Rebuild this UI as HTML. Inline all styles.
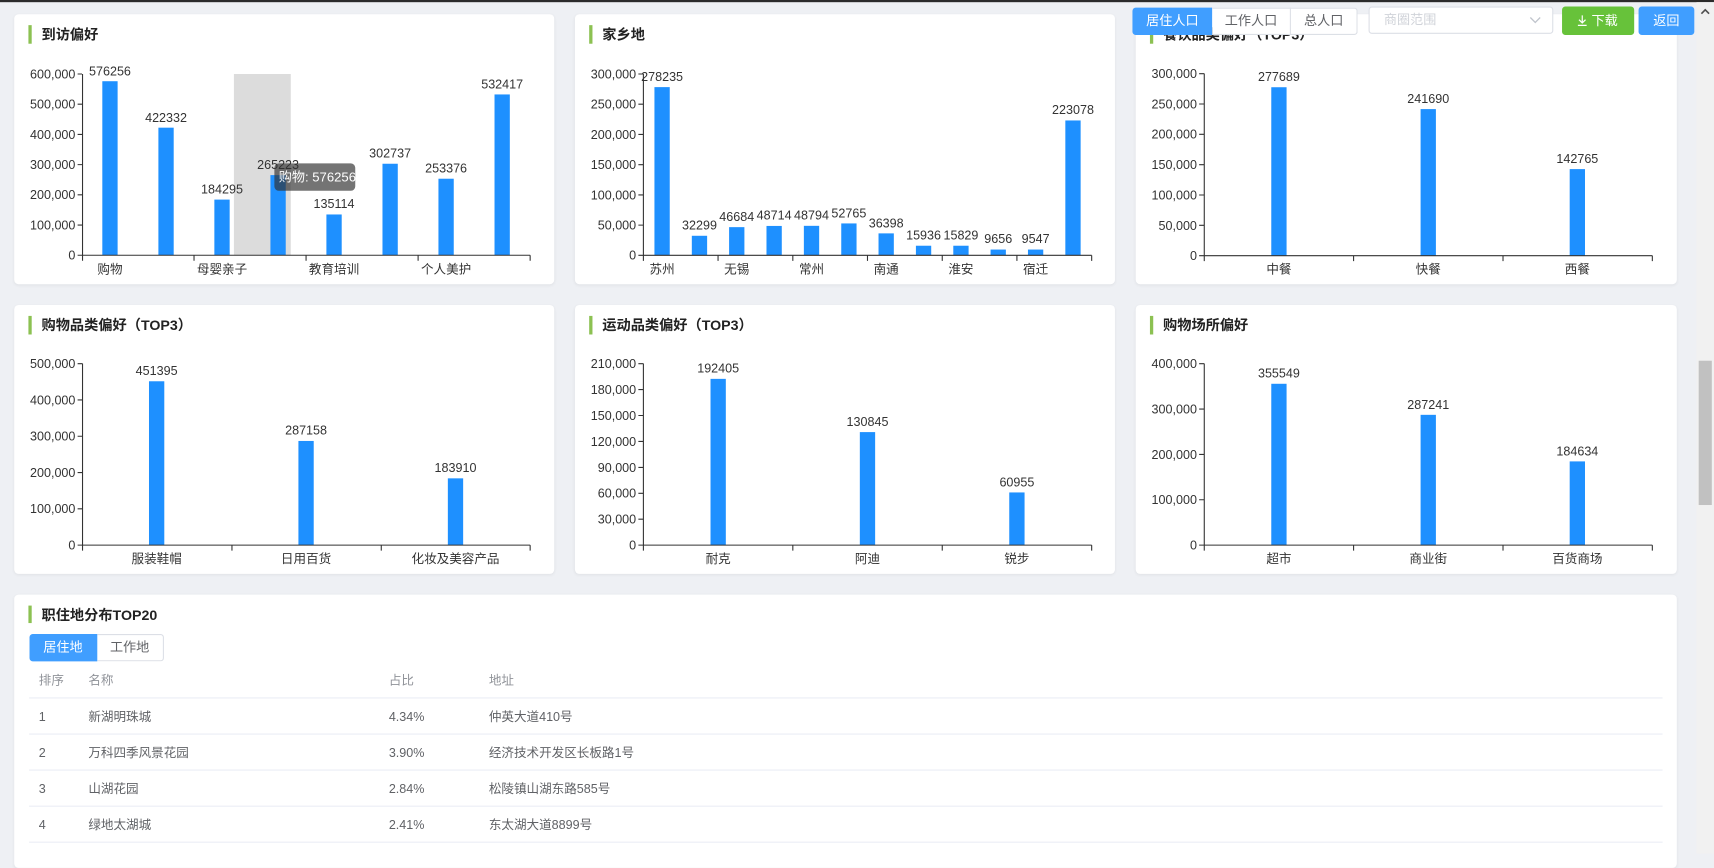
<!DOCTYPE html>
<html><head><meta charset="utf-8">
<style>
*{margin:0;padding:0;box-sizing:border-box}
html,body{width:1714px;height:854px;overflow:hidden;background:#eef0f4}
#w{position:absolute;left:0;top:0;width:1568px;height:781px;transform:scale(1.0931);transform-origin:0 0;font-family:"Liberation Sans","Noto Sans CJK SC",sans-serif;background:#eef0f4}
.card{position:absolute;background:#fff;border-radius:4px;box-shadow:0 1px 3px rgba(0,0,0,.06)}
.abs{position:absolute}
.btn{position:absolute;font-size:12px;text-align:center;line-height:25px;height:25px}
svg text{font-family:"Liberation Sans","Noto Sans CJK SC",sans-serif}
.tr td{height:33px}
</style></head><body>
<div id="w">
<div class="abs" style="left:0;top:0;width:1568px;height:2px;background:#2b2b2b"></div>
<div class="card" style="left:13px;top:13px;width:494px;height:247px"></div>
<div class="card" style="left:526px;top:13px;width:494px;height:247px"></div>
<div class="card" style="left:1039px;top:13px;width:495px;height:247px"></div>
<div class="card" style="left:13px;top:279px;width:494px;height:246px"></div>
<div class="card" style="left:526px;top:279px;width:494px;height:246px"></div>
<div class="card" style="left:1039px;top:279px;width:495px;height:246px"></div>
<div class="card" style="left:13px;top:544px;width:1521px;height:250px"></div>

<svg class="abs" style="left:0;top:0" width="1568" height="781" viewBox="0 0 1568 781">
<g fill="#8cc152">
<rect x="26" y="23" width="3" height="17"/><rect x="539" y="23" width="3" height="17"/><rect x="1052" y="23" width="3" height="17"/>
<rect x="26" y="289" width="3" height="17"/><rect x="539" y="289" width="3" height="17"/><rect x="1052" y="289" width="3" height="17"/>
<rect x="26" y="554" width="3" height="16"/>
</g>
<g font-size="13" font-weight="bold" fill="#222">
<text x="38" y="36">到访偏好</text><text x="551" y="36">家乡地</text><text x="1064" y="36">餐饮品类偏好（TOP3）</text>
<text x="38" y="302">购物品类偏好（TOP3）</text><text x="551" y="302">运动品类偏好（TOP3）</text><text x="1064" y="302">购物场所偏好</text>
<text x="38" y="567">职住地分布TOP20</text>
</g>

<!-- chart1 -->
<rect x="214" y="67.7" width="52" height="165.8" fill="#dcdcdc"/>
<g fill="#1e90ff">
<rect x="93.6" y="74.3" width="14" height="159.2"/><rect x="144.9" y="116.8" width="14" height="116.7"/><rect x="196.1" y="182.6" width="14" height="50.9"/><rect x="247.4" y="160.2" width="14" height="73.3"/><rect x="298.6" y="196.2" width="14" height="37.3"/><rect x="349.9" y="149.8" width="14" height="83.7"/><rect x="401.1" y="163.5" width="14" height="70"/><rect x="452.4" y="86.4" width="14" height="147.1"/>
</g>
<g stroke="#333" stroke-width="1" fill="none">
<path d="M75.5 67.7V233.5H485M71 233.5h4M71 205.9h4M71 178.2h4M71 150.6h4M71 123h4M71 95.3h4M71 67.7h4M75.5 233.5v5M177.5 233.5v5M280 233.5v5M382.5 233.5v5M485 233.5v5"/>
</g>
<g font-size="11.5" fill="#333" text-anchor="end">
<text x="69" y="237.5">0</text><text x="69" y="209.9">100,000</text><text x="69" y="182.2">200,000</text><text x="69" y="154.6">300,000</text><text x="69" y="127">400,000</text><text x="69" y="99.3">500,000</text><text x="69" y="71.7">600,000</text>
</g>
<g font-size="11.5" fill="#333" text-anchor="middle">
<text x="100.6" y="69">576256</text><text x="151.9" y="111.5">422332</text><text x="203.1" y="177">184295</text><text x="254.4" y="154.5">265223</text><text x="305.6" y="190.5">135114</text><text x="356.9" y="144">302737</text><text x="408.1" y="158">253376</text><text x="459.4" y="81">532417</text>
<text x="100.6" y="250">购物</text><text x="203.1" y="250">母婴亲子</text><text x="305.6" y="250">教育培训</text><text x="408.1" y="250">个人美护</text>
</g>
<rect x="251" y="149.5" width="74" height="25" rx="4" fill="rgba(50,50,50,0.68)"/>
<text x="255" y="166" font-size="12" fill="#fff">购物: 576256</text>

<!-- chart2 -->
<g fill="#1e90ff">
<rect x="598.7" y="79.7" width="14" height="153.9"/><rect x="632.9" y="215.7" width="14" height="17.9"/><rect x="667" y="207.8" width="14" height="25.8"/><rect x="701.2" y="206.7" width="14" height="26.9"/><rect x="735.4" y="206.6" width="14" height="27"/><rect x="769.6" y="204.4" width="14" height="29.2"/><rect x="803.7" y="213.5" width="14" height="20.1"/><rect x="837.9" y="224.8" width="14" height="8.8"/><rect x="872.1" y="224.8" width="14" height="8.8"/><rect x="906.2" y="228.3" width="14" height="5.3"/><rect x="940.4" y="228.3" width="14" height="5.3"/><rect x="974.6" y="110.2" width="14" height="123.4"/>
</g>
<g stroke="#333" fill="none">
<path d="M588.6 67.7V233.6H998.7M584 233.6h4.6M584 205.95h4.6M584 178.3h4.6M584 150.65h4.6M584 123h4.6M584 95.35h4.6M584 67.7h4.6M588.6 233.6v5M656.9 233.6v5M725.3 233.6v5M793.6 233.6v5M862 233.6v5M930.3 233.6v5M998.7 233.6v5"/>
</g>
<g font-size="11.5" fill="#333" text-anchor="end">
<text x="582" y="237.6">0</text><text x="582" y="210">50,000</text><text x="582" y="182.3">100,000</text><text x="582" y="154.7">150,000</text><text x="582" y="127">200,000</text><text x="582" y="99.4">250,000</text><text x="582" y="71.7">300,000</text>
</g>
<g font-size="11.5" fill="#333" text-anchor="middle">
<text x="605.7" y="74">278235</text><text x="639.9" y="210">32299</text><text x="674" y="202">46684</text><text x="708.2" y="201">48714</text><text x="742.4" y="201">48794</text><text x="776.6" y="199">52765</text><text x="810.7" y="208">36398</text><text x="844.9" y="219">15936</text><text x="879.1" y="219">15829</text><text x="913.2" y="222.5">9656</text><text x="947.4" y="222.5">9547</text><text x="981.6" y="104.5">223078</text>
<text x="605.7" y="250">苏州</text><text x="674" y="250">无锡</text><text x="742.4" y="250">常州</text><text x="810.7" y="250">南通</text><text x="879.1" y="250">淮安</text><text x="947.4" y="250">宿迁</text>
</g>

<!-- chart3 -->
<g fill="#1e90ff"><rect x="1163" y="79.8" width="14" height="154.1"/><rect x="1299.6" y="99.8" width="14" height="134.1"/><rect x="1436" y="154.7" width="14" height="79.2"/></g>
<g stroke="#333" fill="none"><path d="M1101.7 67.4V233.9H1511.6M1097 233.9h4.7M1097 206.15h4.7M1097 178.4h4.7M1097 150.65h4.7M1097 122.9h4.7M1097 95.15h4.7M1097 67.4h4.7M1101.7 233.9v5M1238.3 233.9v5M1375 233.9v5M1511.6 233.9v5"/></g>
<g font-size="11.5" fill="#333" text-anchor="end">
<text x="1095" y="237.9">0</text><text x="1095" y="210.2">50,000</text><text x="1095" y="182.4">100,000</text><text x="1095" y="154.7">150,000</text><text x="1095" y="126.9">200,000</text><text x="1095" y="99.2">250,000</text><text x="1095" y="71.4">300,000</text>
</g>
<g font-size="11.5" fill="#333" text-anchor="middle">
<text x="1170" y="74">277689</text><text x="1306.6" y="94">241690</text><text x="1443" y="149">142765</text>
<text x="1170" y="250">中餐</text><text x="1306.6" y="250">快餐</text><text x="1443" y="250">西餐</text>
</g>

<!-- chart4 -->
<g fill="#1e90ff"><rect x="136.3" y="348.8" width="14" height="149.9"/><rect x="273" y="403.4" width="14" height="95.3"/><rect x="409.7" y="437.6" width="14" height="61.1"/></g>
<g stroke="#333" fill="none"><path d="M75.5 332.7V498.7H485M71 498.7h4.5M71 465.5h4.5M71 432.3h4.5M71 399.1h4.5M71 365.9h4.5M71 332.7h4.5M75.5 498.7v5M212.2 498.7v5M348.8 498.7v5M485 498.7v5"/></g>
<g font-size="11.5" fill="#333" text-anchor="end">
<text x="69" y="502.7">0</text><text x="69" y="469.5">100,000</text><text x="69" y="436.3">200,000</text><text x="69" y="403.1">300,000</text><text x="69" y="369.9">400,000</text><text x="69" y="336.7">500,000</text>
</g>
<g font-size="11.5" fill="#333" text-anchor="middle">
<text x="143.3" y="343">451395</text><text x="280" y="397.5">287158</text><text x="416.7" y="432">183910</text>
<text x="143.3" y="515">服装鞋帽</text><text x="280" y="515">日用百货</text><text x="416.7" y="515">化妆及美容产品</text>
</g>

<!-- chart5 -->
<g fill="#1e90ff"><rect x="650" y="346.6" width="14" height="152.1"/><rect x="786.6" y="395.3" width="14" height="103.4"/><rect x="923.3" y="450.5" width="14" height="48.2"/></g>
<g stroke="#333" fill="none"><path d="M588.6 332.7V498.7H998.7M584 498.7h4.6M584 475h4.6M584 451.3h4.6M584 427.6h4.6M584 403.8h4.6M584 380.1h4.6M584 356.4h4.6M584 332.7h4.6M588.6 498.7v5M725.3 498.7v5M862 498.7v5M998.7 498.7v5"/></g>
<g font-size="11.5" fill="#333" text-anchor="end">
<text x="582" y="502.7">0</text><text x="582" y="479">30,000</text><text x="582" y="455.3">60,000</text><text x="582" y="431.6">90,000</text><text x="582" y="407.8">120,000</text><text x="582" y="384.1">150,000</text><text x="582" y="360.4">180,000</text><text x="582" y="336.7">210,000</text>
</g>
<g font-size="11.5" fill="#333" text-anchor="middle">
<text x="657" y="341">192405</text><text x="793.6" y="389.5">130845</text><text x="930.3" y="445">60955</text>
<text x="657" y="515">耐克</text><text x="793.6" y="515">阿迪</text><text x="930.3" y="515">锐步</text>
</g>

<!-- chart6 -->
<g fill="#1e90ff"><rect x="1163" y="351.1" width="14" height="147.6"/><rect x="1299.6" y="379.5" width="14" height="119.2"/><rect x="1436" y="422.1" width="14" height="76.6"/></g>
<g stroke="#333" fill="none"><path d="M1101.7 332.7V498.7H1511.6M1097 498.7h4.7M1097 457.2h4.7M1097 415.7h4.7M1097 374.2h4.7M1097 332.7h4.7M1101.7 498.7v5M1238.3 498.7v5M1375 498.7v5M1511.6 498.7v5"/></g>
<g font-size="11.5" fill="#333" text-anchor="end">
<text x="1095" y="502.7">0</text><text x="1095" y="461.2">100,000</text><text x="1095" y="419.7">200,000</text><text x="1095" y="378.2">300,000</text><text x="1095" y="336.7">400,000</text>
</g>
<g font-size="11.5" fill="#333" text-anchor="middle">
<text x="1170" y="345.5">355549</text><text x="1306.6" y="374">287241</text><text x="1443" y="416.5">184634</text>
<text x="1170" y="515">超市</text><text x="1306.6" y="515">商业街</text><text x="1443" y="515">百货商场</text>
</g>

<!-- table -->
<g stroke="#ebeef5"><path d="M26.6 638.5H1521M26.6 671.5H1521M26.6 704.5H1521M26.6 737.5H1521M26.6 770.5H1521"/></g>
<g font-size="11.5" fill="#909399"><text x="35.5" y="626">排序</text><text x="80.8" y="626">名称</text><text x="355.7" y="626">占比</text><text x="447.2" y="626">地址</text></g>
<g font-size="11.5" fill="#606266">
<text x="35.5" y="659.5">1</text><text x="80.8" y="659.5">新湖明珠城</text><text x="355.7" y="659.5">4.34%</text><text x="447.2" y="659.5">仲英大道410号</text>
<text x="35.5" y="692.5">2</text><text x="80.8" y="692.5">万科四季风景花园</text><text x="355.7" y="692.5">3.90%</text><text x="447.2" y="692.5">经济技术开发区长板路1号</text>
<text x="35.5" y="725.5">3</text><text x="80.8" y="725.5">山湖花园</text><text x="355.7" y="725.5">2.84%</text><text x="447.2" y="725.5">松陵镇山湖东路585号</text>
<text x="35.5" y="758.5">4</text><text x="80.8" y="758.5">绿地太湖城</text><text x="355.7" y="758.5">2.41%</text><text x="447.2" y="758.5">东太湖大道8899号</text>
</g>
</svg>

<!-- table tabs -->
<div class="btn" style="left:26.6px;top:580px;width:62px;background:#409eff;color:#fff;border-radius:3px 0 0 3px">居住地</div>
<div class="btn" style="left:88.6px;top:580px;width:61px;border:1px solid #dcdfe6;border-left:none;color:#606266;border-radius:0 3px 3px 0;line-height:23px">工作地</div>

<!-- top controls -->
<div class="btn" style="left:1036px;top:7px;width:73px;background:#409eff;color:#fff;border-radius:3px 0 0 3px">居住人口</div>
<div class="btn" style="left:1109px;top:7px;width:72px;background:#fff;border:1px solid #dcdfe6;border-left:none;color:#606266;line-height:23px">工作人口</div>
<div class="btn" style="left:1181px;top:7px;width:61px;background:#fff;border:1px solid #dcdfe6;border-left:none;color:#606266;border-radius:0 3px 3px 0;line-height:23px">总人口</div>
<div class="btn" style="left:1252px;top:6px;width:169px;background:#fff;border:1px solid #dcdfe6;border-radius:3px;color:#d0d3d9;text-align:left;padding-left:13px;line-height:23px">商圈范围
<svg class="abs" style="right:10px;top:8px" width="11" height="7" viewBox="0 0 11 7"><path d="M1 1l4.5 4.5L10 1" stroke="#c0c4cc" fill="none" stroke-width="1.2"/></svg></div>
<div class="btn" style="left:1428.5px;top:5.5px;width:66px;height:26px;line-height:26px;background:#67c23a;color:#fff;border-radius:3px">
<svg style="vertical-align:-1px;margin-right:4px" width="9" height="10" viewBox="0 0 9 10"><path d="M4.5 0v6.5M1.5 4l3 3 3-3M0.5 9.2h8" stroke="#fff" fill="none" stroke-width="1.1"/></svg>下载</div>
<div class="btn" style="left:1499px;top:5.5px;width:51px;height:26px;line-height:26px;background:#409eff;color:#fff;border-radius:3px">返回</div>

<!-- scrollbar -->
<div class="abs" style="left:1552px;top:2px;width:16px;height:779px;background:#f1f1f1"></div>
<svg class="abs" style="left:1555px;top:7px" width="10" height="7" viewBox="0 0 10 7"><path d="M1.5 5.5L5 2l3.5 3.5" stroke="#505050" fill="none" stroke-width="1.5"/></svg>
<div class="abs" style="left:1554px;top:330px;width:12px;height:132px;background:#c1c1c1"></div>
</div>
</body></html>
